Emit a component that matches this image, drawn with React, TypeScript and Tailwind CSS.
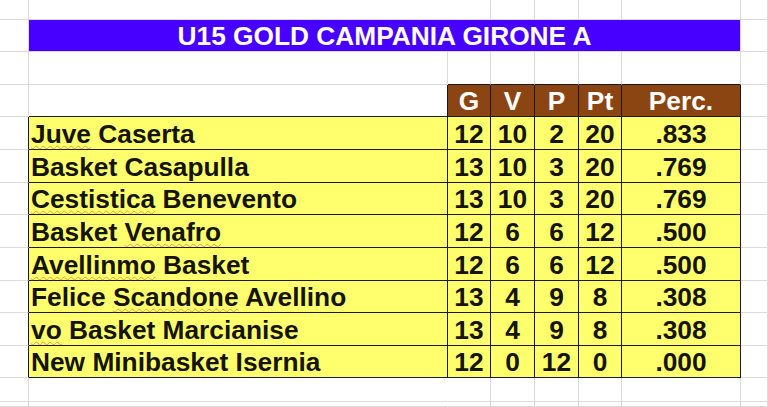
import React from 'react';

const teams = [
  { name: [['Juve', true], ['Caserta', false]], g: 12, v: 10, p: 2, pt: 20, perc: '.833' },
  { name: [['Basket', false], ['Casapulla', false]], g: 13, v: 10, p: 3, pt: 20, perc: '.769' },
  { name: [['Cestistica', true], ['Benevento', false]], g: 13, v: 10, p: 3, pt: 20, perc: '.769' },
  { name: [['Basket', false], ['Venafro', true]], g: 12, v: 6, p: 6, pt: 12, perc: '.500' },
  { name: [['Avellinmo', true], ['Basket', false]], g: 12, v: 6, p: 6, pt: 12, perc: '.500' },
  { name: [['Felice', false], ['Scandone', true], ['Avellino', false]], g: 13, v: 4, p: 9, pt: 8, perc: '.308' },
  { name: [['vo', true], ['Basket', false], ['Marcianise', false]], g: 13, v: 4, p: 9, pt: 8, perc: '.308' },
  { name: [['New', false], ['Minibasket', false], ['Isernia', false]], g: 12, v: 0, p: 12, pt: 0, perc: '.000' },
] as { name: [string, boolean][]; g: number; v: number; p: number; pt: number; perc: string }[];

// plain spreadsheet cell: light gridline right + bottom
const gray = 'border-r border-b border-r-[#dadada] border-b-[#dadada]';
const yellowCell = 'border-r border-b border-r-[#1a1a1a] border-b-[#1a1a1a] bg-[#ffff6d] flex items-end justify-center text-[#141400]';
const headCell = 'border-r border-b border-r-[#1a1a1a] border-b-[#1a1a1a] bg-[#8b4513] flex items-end justify-center text-white';

function BlankRow() {
  return (
    <>
      {Array.from({ length: 8 }).map((_, i) => (
        <div key={i} className={i === 1 ? 'border-b border-b-[#dadada] border-r border-r-transparent' : gray} />
      ))}
    </>
  );
}

export default function App() {
  return (
    <div
      className="w-[768px] h-[407px] overflow-hidden bg-white font-bold text-[26.3px] leading-none"
      style={{ fontFamily: '"Liberation Sans", Arial, sans-serif' }}
    >
      <div className="grid grid-cols-[29px_419px_43px_44px_44px_43px_119px_1fr] grid-rows-[20px_32px_33px_32px_33px_33px_32px_33px_33px_32px_33px_32px_24px_5px]">
        {/* row 0 */}
        {Array.from({ length: 8 }).map((_, i) => (
          <div key={'r0' + i} className={i === 1 ? 'border-b border-b-[#dadada]' : gray} />
        ))}

        {/* title */}
        <div className={gray} />
        <div className="col-span-6 bg-[#4700ff] border-r border-b border-r-[#dadada] border-b-[#dadada] flex items-end justify-center pb-[2px] text-white">
          U15 GOLD CAMPANIA GIRONE A
        </div>
        <div className={gray} />

        {/* blank above header */}
        <div className={gray} />
        <div className={gray} />
        {Array.from({ length: 5 }).map((_, i) => (
          <div key={'r2' + i} className="border-r border-b border-r-[#dadada] border-b-[#1a1a1a]" />
        ))}
        <div className={gray} />

        {/* header */}
        <div className={gray} />
        <div className="border-r border-b border-r-[#1a1a1a] border-b-[#1a1a1a]" />
        {['G', 'V', 'P', 'Pt', 'Perc.'].map((h) => (
          <div key={h} className={headCell + ' pb-[2px]'}>
            {h}
          </div>
        ))}
        <div className={gray} />

        {/* data rows */}
        {teams.map((t, r) => (
          <React.Fragment key={r}>
            <div className="border-r border-b border-r-[#1a1a1a] border-b-[#dadada]" />
            <div className="border-r border-b border-r-[#1a1a1a] border-b-[#1a1a1a] bg-[#ffff6d] flex items-end pl-[2px] pb-[2px] text-[#141400] whitespace-pre">
              {t.name.map(([w, bad], i) => (
                <span key={i}>
                  {i > 0 ? ' ' : ''}
                  <span className={bad ? 'underline decoration-wavy decoration-[#e0a040] decoration-1 underline-offset-[2px]' : ''}>{w}</span>
                </span>
              ))}
            </div>
            {[t.g, t.v, t.p, t.pt, t.perc].map((val, i) => (
              <div key={i} className={yellowCell + ' pb-[2px]'}>
                {val}
              </div>
            ))}
            <div className={gray} />
          </React.Fragment>
        ))}

        {/* bottom rows */}
        <BlankRow />
        <BlankRow />
      </div>
    </div>
  );
}
